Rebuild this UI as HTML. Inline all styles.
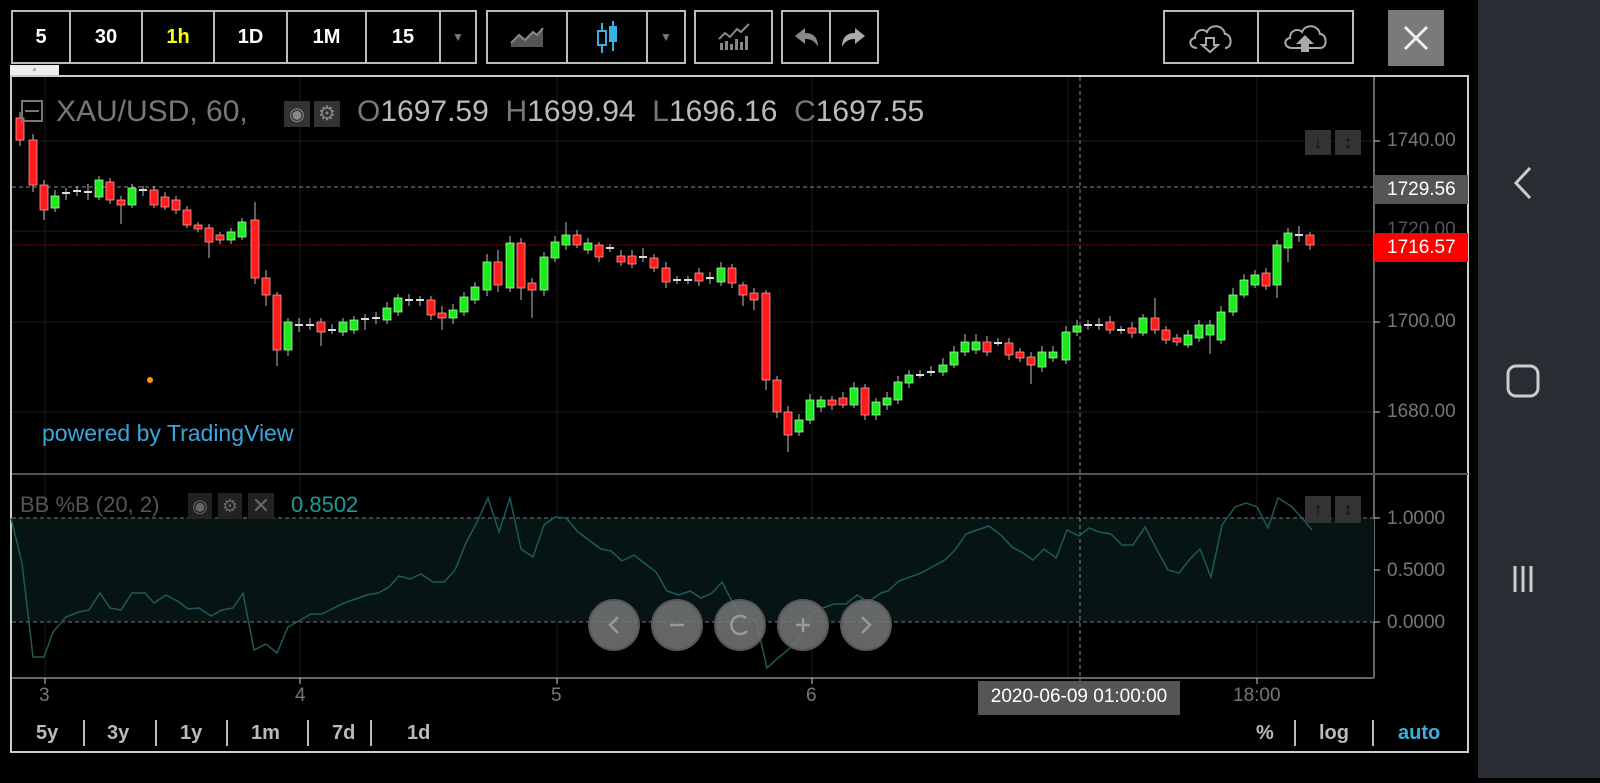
<!DOCTYPE html>
<html><head><meta charset="utf-8"><style>
*{margin:0;padding:0;box-sizing:border-box}
body{width:1600px;height:778px;background:#000;position:relative;overflow:hidden;font-family:"Liberation Sans",sans-serif;color:#fff}
.tb{position:absolute;top:10px;height:54px;border:2px solid #bbb;display:flex}
.tb div{height:100%;border-right:2px solid #bbb;display:flex;align-items:center;justify-content:center;font-weight:bold;font-size:20px;color:#fff}
.tb div:last-child{border-right:none}
.nav{position:absolute;left:1478px;top:0;width:122px;height:778px;background:#282c33}
.ax{position:absolute;color:#777;font-size:19px}
.btm{position:absolute;top:722px;font-size:20px;font-weight:bold;color:#bbb}
.sep{position:absolute;top:720px;width:2px;height:26px;background:#bbb}
</style></head><body>
<div class="tb" style="left:11px;width:466px">
<div style="width:58px">5</div><div style="width:72px">30</div><div style="width:72px;color:#ff0">1h</div><div style="width:73px">1D</div><div style="width:79px">1M</div><div style="width:74px">15</div><div style="flex:1;color:#777;font-size:12px">▼</div></div>
<div class="tb" style="left:486px;width:200px">
<div style="width:80px"><svg width="36" height="24"><path d="M2 22 L2 18 L10 10 L16 15 L24 7 L28 10 L34 3 L34 22Z" fill="#555"/><path d="M2 18 L10 10 L16 15 L24 7 L28 10 L34 3" stroke="#888" stroke-width="2" fill="none"/></svg></div>
<div style="width:80px"><svg width="30" height="36"><line x1="10" y1="4" x2="10" y2="34" stroke="#3ab0e0" stroke-width="2"/><rect x="6" y="12" width="8" height="14" fill="#000" stroke="#3ab0e0" stroke-width="2"/><line x1="21" y1="2" x2="21" y2="32" stroke="#3ab0e0" stroke-width="2"/><rect x="17" y="7" width="8" height="16" fill="#3ab0e0"/></svg></div>
<div style="flex:1;color:#777;font-size:12px">▼</div></div>
<div class="tb" style="left:694px;width:79px"><div style="width:75px"><svg width="34" height="28"><path d="M2 16 L8 10 L13 14 L20 6 L24 9 L32 1" stroke="#888" stroke-width="2" fill="none"/><g fill="#888"><rect x="3" y="20" width="3" height="7"/><rect x="8" y="18" width="3" height="9"/><rect x="13" y="21" width="3" height="6"/><rect x="18" y="16" width="3" height="11"/><rect x="23" y="19" width="3" height="8"/><rect x="28" y="13" width="3" height="14"/></g></svg></div></div>
<div class="tb" style="left:781px;width:98px"><div style="width:48px"><svg width="30" height="24"><path d="M4 11 L14 3 L14 8 C22 8 27 12 27 22 C24 16 20 14 14 14 L14 19Z" fill="#888"/></svg></div><div style="flex:1"><svg width="30" height="24"><path d="M26 11 L16 3 L16 8 C8 8 3 12 3 22 C6 16 10 14 16 14 L16 19Z" fill="#aaa"/></svg></div></div>
<div class="tb" style="left:1163px;width:191px"><div style="width:94px"><svg width="52" height="34"><path d="M12 28 C4 28 3 19 10 18 C10 10 18 8 22 12 C25 4 38 4 40 14 C47 14 48 28 40 28" stroke="#aaa" stroke-width="2" fill="none"/><path d="M21 18 L29 18 L29 25 L33 25 L25 32 L17 25 L21 25Z" stroke="#aaa" stroke-width="2" fill="#000"/></svg></div><div style="flex:1"><svg width="52" height="34"><path d="M12 28 C4 28 3 19 10 18 C10 10 18 8 22 12 C25 4 38 4 40 14 C47 14 48 28 40 28 L12 28" stroke="#aaa" stroke-width="2" fill="none"/><path d="M21 32 L29 32 L29 24 L34 24 L25 15 L16 24 L21 24Z" fill="#aaa"/></svg></div></div>
<div style="position:absolute;left:1388px;top:10px;width:56px;height:56px;background:#7a7a7a"><svg width="56" height="56"><path d="M17 17 L39 39 M39 17 L17 39" stroke="#eee" stroke-width="3"/></svg></div>
<div style="position:absolute;left:10px;top:65px;width:49px;height:10px;background:#eee;color:#aaa;font-size:7px;text-align:center;line-height:9px">▲</div>
<div class="nav"><svg width="122" height="778"><path d="M52 168 L38 183 L52 198" stroke="#ccc" stroke-width="3" fill="none"/><rect x="30" y="366" width="30" height="30" rx="8" stroke="#ccc" stroke-width="3" fill="none"/><path d="M37 566 V592 M45 566 V592 M53 566 V592" stroke="#ccc" stroke-width="3"/></svg></div>

<svg style="position:absolute;left:0;top:0" width="1478" height="778">
<rect x="11" y="76" width="1457" height="676" fill="none" stroke="#ccc" stroke-width="2"/>
<g stroke="#1c1c1c" stroke-width="1">
<line x1="45" y1="77" x2="45" y2="678"/><line x1="300" y1="77" x2="300" y2="678"/><line x1="557" y1="77" x2="557" y2="678"/><line x1="812" y1="77" x2="812" y2="678"/><line x1="1068" y1="77" x2="1068" y2="678"/><line x1="1257" y1="77" x2="1257" y2="678"/>
<line x1="12" y1="141" x2="1374" y2="141"/><line x1="12" y1="231" x2="1374" y2="231"/><line x1="12" y1="322" x2="1374" y2="322"/><line x1="12" y1="412" x2="1374" y2="412"/><line x1="12" y1="570" x2="1374" y2="570"/>
</g>
<line x1="1374" y1="77" x2="1374" y2="678" stroke="#666" stroke-width="2"/>
<line x1="12" y1="474" x2="1468" y2="474" stroke="#555" stroke-width="2"/>
<line x1="12" y1="678" x2="1374" y2="678" stroke="#666" stroke-width="2"/>
<rect x="12" y="518" width="1362" height="104" fill="#061414"/>
<line x1="12" y1="518" x2="1374" y2="518" stroke="#777" stroke-dasharray="4 3"/>
<line x1="12" y1="622" x2="1374" y2="622" stroke="#777" stroke-dasharray="4 3"/>
<line x1="12" y1="187" x2="1374" y2="187" stroke="#888" stroke-dasharray="4 3"/>
<line x1="1080" y1="77" x2="1080" y2="690" stroke="#888" stroke-dasharray="4 3"/>
<line x1="12" y1="245" x2="1374" y2="245" stroke="#8a0000" stroke-dasharray="2 1"/>
<g stroke="#ccc"><line x1="1374" y1="141" x2="1380" y2="141"/><line x1="1374" y1="322" x2="1380" y2="322"/><line x1="1374" y1="412" x2="1380" y2="412"/><line x1="1374" y1="518" x2="1380" y2="518"/><line x1="1374" y1="570" x2="1380" y2="570"/><line x1="1374" y1="622" x2="1380" y2="622"/><line x1="45" y1="678" x2="45" y2="684"/><line x1="300" y1="678" x2="300" y2="684"/><line x1="557" y1="678" x2="557" y2="684"/><line x1="812" y1="678" x2="812" y2="684"/><line x1="1257" y1="678" x2="1257" y2="684"/></g>
<polyline fill="none" stroke="#1f5a5a" stroke-width="1.5" points="11,518 22,563 33,657 44,657 53,632 66,617 79,612 89,610 100,593 110,608 121,610 132,593 145,593 154,603 166,595 179,602 188,609 199,608 211,616 222,610 233,608 243,593 254,650 266,644 277,653 288,627 311,614 322,614 344,603 367,595 378,593 389,587 399,576 410,579 421,574 433,582 444,582 455,570 466,543 478,520 488,498 499,532 510,498 521,549 533,557 544,525 555,517 566,518 578,532 590,541 601,549 611,551 622,561 634,555 656,572 667,591 679,595 690,591 701,598 712,593 722,582 733,603 744,618 756,620 767,668 778,658 789,649 801,637 812,613 823,608 834,604 846,604 857,595 868,602 881,593 888,591 899,581 910,577 921,573 932,567 945,560 955,550 966,534 977,530 989,526 1001,535 1012,547 1023,553 1033,560 1044,549 1056,558 1067,530 1079,536 1089,528 1099,532 1111,534 1122,545 1133,545 1145,527 1157,550 1168,570 1179,573 1190,559 1200,549 1211,577 1222,525 1235,507 1246,503 1257,507 1268,528 1278,498 1291,506 1302,518 1312,530"/>
</svg>

<svg style="position:absolute;left:0;top:0" width="1374" height="480">
<g stroke="#bbb" stroke-width="1">
<path d="M20 112V146 M33 134V192 M44 180V220 M55 190V212 M66 188V200 M77 186V196 M88 184V200 M99 176V200 M110 178V204 M121 196V224 M132 184V208 M143 186V196 M154 186V208 M165 192V210 M176 196V214 M187 206V228 M198 222V232 M209 224V258 M220 232V244 M231 228V244 M242 218V240 M255 202V284 M266 270V306 M277 292V366 M288 318V356 M299 318V332 M310 318V330 M321 318V346 M332 324V334 M343 318V336 M354 316V334 M365 314V330 M376 312V324 M387 302V324 M398 294V316 M409 294V306 M420 296V306 M431 296V320 M442 306V330 M453 304V324 M464 292V316 M475 282V304 M487 254V296 M498 250V292 M510 236V292 M521 238V300 M532 278V318 M544 252V296 M555 236V262 M566 222V250 M577 230V248 M588 238V254 M599 242V262 M610 244V252 M621 250V266 M632 250V268 M643 248V262 M654 254V272 M666 262V288 M677 276V284 M688 276V284 M699 268V286 M710 272V284 M721 262V286 M732 264V288 M743 282V306 M754 288V310 M766 290V390 M777 376V418 M788 406V452 M799 414V436 M810 394V424 M821 396V412 M832 396V410 M843 392V408 M854 382V408 M865 384V420 M876 398V420 M887 392V410 M898 376V404 M909 370V388 M920 370V378 M931 366V376 M943 358V376 M954 346V368 M965 334V356 M976 334V354 M987 336V356 M998 338V346 M1009 338V360 M1020 348V362 M1031 352V384 M1042 346V372 M1053 346V362 M1066 326V364 M1077 320V336 M1088 320V330 M1099 318V330 M1110 316V334 M1121 326V334 M1132 322V338 M1143 314V336 M1155 298V334 M1166 326V344 M1177 334V346 M1188 330V348 M1199 320V342 M1210 320V354 M1221 306V344 M1233 288V316 M1244 274V298 M1255 270V288 M1266 268V290 M1277 240V298 M1288 228V262 M1299 226V242 M1310 232V250"/>
</g>
<g fill="#1fea1f" stroke="#9f9" stroke-width=".8">
<rect x="51" y="196" width="8" height="12"/><rect x="95" y="180" width="8" height="17"/><rect x="128" y="188" width="8" height="17"/><rect x="227" y="232" width="8" height="8"/><rect x="238" y="222" width="8" height="15"/><rect x="284" y="322" width="8" height="28"/><rect x="339" y="322" width="8" height="10"/><rect x="350" y="320" width="8" height="10"/><rect x="383" y="308" width="8" height="12"/><rect x="394" y="298" width="8" height="14"/><rect x="449" y="310" width="8" height="8"/><rect x="460" y="297" width="8" height="15"/><rect x="471" y="287" width="8" height="13"/><rect x="483" y="262" width="8" height="28"/><rect x="506" y="243" width="8" height="45"/><rect x="540" y="257" width="8" height="33"/><rect x="551" y="242" width="8" height="16"/><rect x="562" y="235" width="8" height="10"/><rect x="584" y="243" width="8" height="7"/><rect x="717" y="268" width="8" height="14"/><rect x="795" y="420" width="8" height="12"/><rect x="806" y="400" width="8" height="20"/><rect x="817" y="400" width="8" height="7"/><rect x="850" y="388" width="8" height="17"/><rect x="872" y="402" width="8" height="13"/><rect x="883" y="398" width="8" height="7"/><rect x="894" y="382" width="8" height="18"/><rect x="905" y="375" width="8" height="8"/><rect x="939" y="365" width="8" height="7"/><rect x="950" y="352" width="8" height="13"/><rect x="961" y="342" width="8" height="10"/><rect x="972" y="342" width="8" height="8"/><rect x="1038" y="352" width="8" height="15"/><rect x="1049" y="352" width="8" height="6"/><rect x="1062" y="332" width="8" height="28"/><rect x="1073" y="326" width="8" height="6"/><rect x="1139" y="318" width="8" height="15"/><rect x="1184" y="335" width="8" height="10"/><rect x="1195" y="325" width="8" height="13"/><rect x="1206" y="325" width="8" height="10"/><rect x="1217" y="312" width="8" height="28"/><rect x="1229" y="295" width="8" height="17"/><rect x="1240" y="280" width="8" height="15"/><rect x="1251" y="275" width="8" height="10"/><rect x="1273" y="245" width="8" height="40"/><rect x="1284" y="233" width="8" height="15"/>
</g>
<g fill="#ff1c1c" stroke="#f99" stroke-width=".8">
<rect x="16" y="118" width="8" height="22"/><rect x="29" y="140" width="8" height="45"/><rect x="40" y="185" width="8" height="25"/><rect x="106" y="182" width="8" height="18"/><rect x="117" y="200" width="8" height="5"/><rect x="150" y="190" width="8" height="15"/><rect x="161" y="197" width="8" height="10"/><rect x="172" y="200" width="8" height="10"/><rect x="183" y="210" width="8" height="15"/><rect x="194" y="225" width="8" height="4"/><rect x="205" y="228" width="8" height="14"/><rect x="216" y="235" width="8" height="5"/><rect x="251" y="220" width="8" height="58"/><rect x="262" y="278" width="8" height="17"/><rect x="273" y="295" width="8" height="55"/><rect x="317" y="322" width="8" height="10"/><rect x="427" y="300" width="8" height="15"/><rect x="438" y="313" width="8" height="5"/><rect x="494" y="262" width="8" height="23"/><rect x="517" y="243" width="8" height="45"/><rect x="528" y="283" width="8" height="7"/><rect x="573" y="235" width="8" height="10"/><rect x="595" y="245" width="8" height="12"/><rect x="617" y="256" width="8" height="6"/><rect x="628" y="256" width="8" height="8"/><rect x="650" y="258" width="8" height="10"/><rect x="662" y="268" width="8" height="14"/><rect x="695" y="273" width="8" height="8"/><rect x="728" y="268" width="8" height="15"/><rect x="739" y="285" width="8" height="10"/><rect x="750" y="293" width="8" height="7"/><rect x="762" y="293" width="8" height="87"/><rect x="773" y="380" width="8" height="32"/><rect x="784" y="412" width="8" height="23"/><rect x="828" y="400" width="8" height="5"/><rect x="839" y="398" width="8" height="7"/><rect x="861" y="388" width="8" height="27"/><rect x="983" y="342" width="8" height="10"/><rect x="1005" y="343" width="8" height="12"/><rect x="1016" y="352" width="8" height="6"/><rect x="1027" y="357" width="8" height="8"/><rect x="1106" y="322" width="8" height="8"/><rect x="1128" y="328" width="8" height="5"/><rect x="1151" y="318" width="8" height="12"/><rect x="1162" y="330" width="8" height="10"/><rect x="1173" y="338" width="8" height="4"/><rect x="1262" y="273" width="8" height="13"/><rect x="1306" y="235" width="8" height="10"/>
</g>
<g fill="#ddd"><rect x="62" y="192" width="8" height="2"/><rect x="73" y="190" width="8" height="2"/><rect x="84" y="191" width="8" height="2"/><rect x="139" y="189" width="8" height="2"/><rect x="295" y="324" width="8" height="2"/><rect x="306" y="324" width="8" height="2"/><rect x="328" y="329" width="8" height="2"/><rect x="361" y="318" width="8" height="2"/><rect x="372" y="317" width="8" height="2"/><rect x="405" y="299" width="8" height="2"/><rect x="416" y="299" width="8" height="2"/><rect x="606" y="247" width="8" height="2"/><rect x="639" y="256" width="8" height="2"/><rect x="673" y="279" width="8" height="2"/><rect x="684" y="279" width="8" height="2"/><rect x="706" y="277" width="8" height="2"/><rect x="916" y="374" width="8" height="2"/><rect x="927" y="371" width="8" height="2"/><rect x="994" y="342" width="8" height="2"/><rect x="1084" y="324" width="8" height="2"/><rect x="1095" y="324" width="8" height="2"/><rect x="1117" y="329" width="8" height="2"/><rect x="1295" y="234" width="8" height="2"/></g>
<circle cx="150" cy="380" r="3" fill="#f90"/>
</svg>

<div style="position:absolute;left:21px;top:100px;width:22px;height:22px;border:2px solid #777"><div style="margin:8px 2px 0;height:2px;background:#777"></div></div>
<div style="position:absolute;left:56px;top:95px;font-size:30px;color:#777">XAU/USD, 60,</div>
<div style="position:absolute;left:284px;top:101px;width:26px;height:26px;background:#333;color:#888;font-size:18px;text-align:center;line-height:26px">◉</div>
<div style="position:absolute;left:314px;top:101px;width:26px;height:26px;background:#333;color:#888;font-size:20px;text-align:center;line-height:26px">⚙</div>
<div style="position:absolute;left:357px;top:95px;font-size:30px;color:#777">O<span style="color:#bbb">1697.59</span> &nbsp;H<span style="color:#bbb">1699.94</span> &nbsp;L<span style="color:#bbb">1696.16</span> &nbsp;C<span style="color:#bbb">1697.55</span></div>
<div style="position:absolute;left:1305px;top:130px;width:26px;height:25px;background:#333;color:#111;font-size:18px;text-align:center;line-height:25px;font-weight:bold">↓</div>
<div style="position:absolute;left:1335px;top:130px;width:26px;height:25px;background:#333;color:#111;font-size:18px;text-align:center;line-height:25px;font-weight:bold">↕</div>
<div class="ax" style="left:1387px;top:130px">1740.00</div>
<div style="position:absolute;left:1374px;top:175px;width:94px;height:29px;background:#555;color:#fff;font-size:19px;line-height:29px;padding-left:13px">1729.56</div>
<div class="ax" style="left:1387px;top:219px;color:#555">1720.00</div>
<div style="position:absolute;left:1374px;top:233px;width:94px;height:29px;background:#f00;color:#fff;font-size:19px;line-height:29px;padding-left:13px">1716.57</div>
<div class="ax" style="left:1387px;top:311px">1700.00</div>
<div class="ax" style="left:1387px;top:401px">1680.00</div>
<div style="position:absolute;left:42px;top:420px;font-size:23px;color:#3aa7dc">powered by TradingView</div>
<div style="position:absolute;left:20px;top:492px;font-size:22px;color:#555">BB %B (20, 2)</div>
<div style="position:absolute;left:188px;top:493px;width:24px;height:26px;background:#222;color:#666;text-align:center;line-height:26px;font-size:18px">◉</div>
<div style="position:absolute;left:218px;top:493px;width:24px;height:26px;background:#222;color:#666;text-align:center;line-height:26px;font-size:18px">⚙</div>
<div style="position:absolute;left:248px;top:493px;width:26px;height:26px;background:#222;color:#666;text-align:center;line-height:26px;font-size:22px">✕</div>
<div style="position:absolute;left:291px;top:492px;font-size:22px;color:#1e9a9a">0.8502</div>
<div style="position:absolute;left:1305px;top:496px;width:26px;height:27px;background:#333;color:#111;font-size:18px;text-align:center;line-height:27px;font-weight:bold">↑</div>
<div style="position:absolute;left:1335px;top:496px;width:26px;height:27px;background:#333;color:#111;font-size:18px;text-align:center;line-height:27px;font-weight:bold">↕</div>
<div class="ax" style="left:1387px;top:508px">1.0000</div>
<div class="ax" style="left:1387px;top:560px">0.5000</div>
<div class="ax" style="left:1387px;top:612px">0.0000</div>
<svg style="position:absolute;left:585px;top:598px" width="310" height="56"><g fill="#777" fill-opacity=".85" stroke="#555" stroke-width="2"><circle cx="29" cy="27" r="25"/><circle cx="92" cy="27" r="25"/><circle cx="155" cy="27" r="25"/><circle cx="218" cy="27" r="25"/><circle cx="281" cy="27" r="25"/></g><g stroke="#999" stroke-width="2.5" fill="none"><path d="M33 19 L25 27 L33 35"/><path d="M85 27 H99"/><path d="M161 20 A9 9 0 1 0 162 33"/><path d="M211 27 H225 M218 20 V34"/><path d="M277 19 L285 27 L277 35"/></g></svg>
<div class="ax" style="left:39px;top:685px">3</div>
<div class="ax" style="left:295px;top:685px">4</div>
<div class="ax" style="left:551px;top:685px">5</div>
<div class="ax" style="left:806px;top:685px">6</div>
<div style="position:absolute;left:978px;top:681px;width:202px;height:34px;background:#555;color:#fff;font-size:19px;line-height:32px;text-align:center">2020-06-09 01:00:00</div>
<div class="ax" style="left:1233px;top:685px">18:00</div>
<div class="btm" style="left:36px">5y</div><div class="sep" style="left:83px"></div>
<div class="btm" style="left:107px">3y</div><div class="sep" style="left:155px"></div>
<div class="btm" style="left:180px">1y</div><div class="sep" style="left:226px"></div>
<div class="btm" style="left:251px">1m</div><div class="sep" style="left:307px"></div>
<div class="btm" style="left:332px">7d</div><div class="sep" style="left:370px"></div>
<div class="btm" style="left:407px">1d</div>
<div class="btm" style="left:1256px">%</div><div class="sep" style="left:1294px"></div>
<div class="btm" style="left:1319px">log</div><div class="sep" style="left:1372px"></div>
<div class="btm" style="left:1398px;color:#3ab0e0">auto</div>
</body></html>
